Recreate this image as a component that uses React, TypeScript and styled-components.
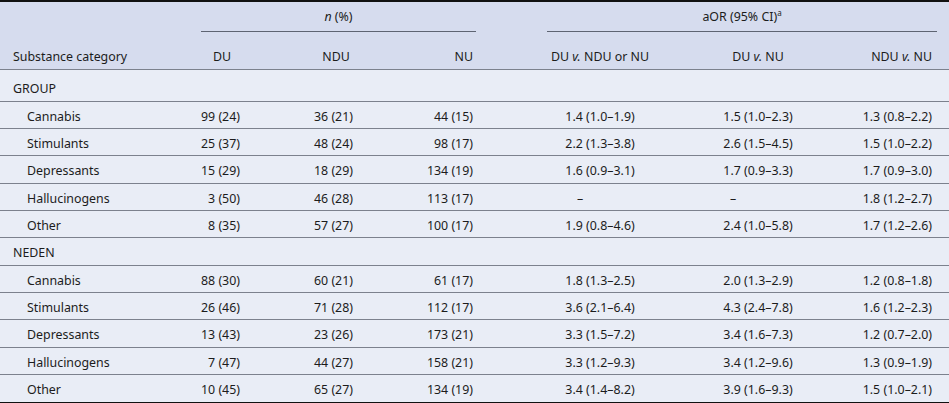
import React from 'react';
import styled, { createGlobalStyle } from 'styled-components';

const GlobalStyle = createGlobalStyle`
  html, body {
    margin: 0;
    padding: 0;
    background: #e9edf6;
  }
  body {
    font-family: "Noto Sans", "DejaVu Sans", sans-serif;
    color: #1c1c1c;
  }
`;

const Table = styled.table`
  width: 949px;
  table-layout: fixed;
  border-collapse: separate;
  border-spacing: 0;
  font-size: 12.4px;
  line-height: 16px;
  background: #e9edf6;
  border-top: 2px solid #111;
  border-bottom: 1px solid #111;
  th, td {
    box-sizing: border-box;
  }
`;

const Head = styled.thead`
  background: #d6dcee;
`;

const HeadCell = styled.th<{ $align?: string; $padLeft?: number; $padRight?: number }>`
  height: 30px;
  padding: 0;
  font-weight: 400;
  text-align: ${p => p.$align || 'center'};
  padding-left: ${p => p.$padLeft || 0}px;
  padding-right: ${p => p.$padRight || 0}px;
  white-space: nowrap;
`;

const ColHeadCell = styled(HeadCell)`
  height: 38px;
  vertical-align: bottom;
  padding-bottom: 5px;
  box-shadow: inset 0 -1px 0 #7c818d;
`;

const GroupLabel = styled.div<{ $left: number; $right: number }>`
  margin: 0 ${p => p.$right}px 0 ${p => p.$left}px;
  border-bottom: 1px solid #5e6472;
  padding: 7px 0 6px;
`;

const Cell = styled.td<{ $height: number; $top: number; $last?: boolean; $align?: string; $padLeft?: number; $padRight?: number }>`
  height: ${p => p.$height}px;
  padding: ${p => p.$top}px ${p => p.$padRight || 0}px 0 ${p => p.$padLeft || 0}px;
  text-align: ${p => p.$align || 'right'};
  white-space: nowrap;
  box-shadow: ${p => (p.$last ? 'none' : 'inset 0 -1px 0 #7c818d')};
`;

const Dash = styled.span<{ $shift: number }>`
  display: inline-block;
  margin-right: ${p => p.$shift}px;
`;

const Sup = styled.sup`
  font-size: 8px;
  vertical-align: 5px;
  line-height: 0;
`;

type Entry = { name: string; du: string; ndu: string; nu: string; a1: string; a2: string; a3: string };

const sections: { title: string; height: number; rows: Entry[] }[] = [
  {
    title: 'GROUP',
    height: 32,
    rows: [
      { name: 'Cannabis', du: '99 (24)', ndu: '36 (21)', nu: '44 (15)', a1: '1.4 (1.0–1.9)', a2: '1.5 (1.0–2.3)', a3: '1.3 (0.8–2.2)' },
      { name: 'Stimulants', du: '25 (37)', ndu: '48 (24)', nu: '98 (17)', a1: '2.2 (1.3–3.8)', a2: '2.6 (1.5–4.5)', a3: '1.5 (1.0–2.2)' },
      { name: 'Depressants', du: '15 (29)', ndu: '18 (29)', nu: '134 (19)', a1: '1.6 (0.9–3.1)', a2: '1.7 (0.9–3.3)', a3: '1.7 (0.9–3.0)' },
      { name: 'Hallucinogens', du: '3 (50)', ndu: '46 (28)', nu: '113 (17)', a1: '–', a2: '–', a3: '1.8 (1.2–2.7)' },
      { name: 'Other', du: '8 (35)', ndu: '57 (27)', nu: '100 (17)', a1: '1.9 (0.8–4.6)', a2: '2.4 (1.0–5.8)', a3: '1.7 (1.2–2.6)' },
    ],
  },
  {
    title: 'NEDEN',
    height: 28,
    rows: [
      { name: 'Cannabis', du: '88 (30)', ndu: '60 (21)', nu: '61 (17)', a1: '1.8 (1.3–2.5)', a2: '2.0 (1.3–2.9)', a3: '1.2 (0.8–1.8)' },
      { name: 'Stimulants', du: '26 (46)', ndu: '71 (28)', nu: '112 (17)', a1: '3.6 (2.1–6.4)', a2: '4.3 (2.4–7.8)', a3: '1.6 (1.2–2.3)' },
      { name: 'Depressants', du: '13 (43)', ndu: '23 (26)', nu: '173 (21)', a1: '3.3 (1.5–7.2)', a2: '3.4 (1.6–7.3)', a3: '1.2 (0.7–2.0)' },
      { name: 'Hallucinogens', du: '7 (47)', ndu: '44 (27)', nu: '158 (21)', a1: '3.3 (1.2–9.3)', a2: '3.4 (1.2–9.6)', a3: '1.3 (0.9–1.9)' },
      { name: 'Other', du: '10 (45)', ndu: '65 (27)', nu: '134 (19)', a1: '3.4 (1.4–8.2)', a2: '3.9 (1.6–9.3)', a3: '1.5 (1.0–2.1)' },
    ],
  },
];

const ROW_H = 27.2;

const orCell = (v: string, shift: number) => (v === '–' ? <Dash $shift={shift}>–</Dash> : v);

export default function App() {
  return (
    <>
      <GlobalStyle />
      <Table>
        <colgroup>
          <col style={{ width: 180 }} />
          <col style={{ width: 60 }} />
          <col style={{ width: 113 }} />
          <col style={{ width: 120 }} />
          <col style={{ width: 224 }} />
          <col style={{ width: 122 }} />
          <col style={{ width: 130 }} />
        </colgroup>
        <Head>
          <tr>
            <HeadCell />
            <HeadCell colSpan={3}>
              <GroupLabel $left={21} $right={-3}>
                <i>n</i> (%)
              </GroupLabel>
            </HeadCell>
            <HeadCell colSpan={3}>
              <GroupLabel $left={74} $right={12}>
                aOR (95% CI)<Sup>a</Sup>
              </GroupLabel>
            </HeadCell>
          </tr>
          <tr>
            <ColHeadCell $align="left" $padLeft={13}>Substance category</ColHeadCell>
            <ColHeadCell $padLeft={24}>DU</ColHeadCell>
            <ColHeadCell $padLeft={79}>NDU</ColHeadCell>
            <ColHeadCell $align="right">NU</ColHeadCell>
            <ColHeadCell $padLeft={30}>
              DU <i>v.</i> NDU or NU
            </ColHeadCell>
            <ColHeadCell>
              DU <i>v.</i> NU
            </ColHeadCell>
            <ColHeadCell $align="right" $padRight={17}>
              NDU <i>v.</i> NU
            </ColHeadCell>
          </tr>
        </Head>
        <tbody>
          {sections.map((s, si) => (
            <React.Fragment key={s.title}>
              <tr>
                <Cell $height={s.height} $top={s.height - 26} $align="left" $padLeft={13} colSpan={7}>
                  {s.title}
                </Cell>
              </tr>
              {s.rows.map((r, ri) => {
                const last = si === sections.length - 1 && ri === s.rows.length - 1;
                const c = { $height: ROW_H, $top: 3, $last: last };
                return (
                  <tr key={s.title + r.name}>
                    <Cell {...c} $align="left" $padLeft={27}>{r.name}</Cell>
                    <Cell {...c}>{r.du}</Cell>
                    <Cell {...c}>{r.ndu}</Cell>
                    <Cell {...c}>{r.nu}</Cell>
                    <Cell {...c} $align="center" $padLeft={30}>{orCell(r.a1, 40)}</Cell>
                    <Cell {...c} $align="center">{orCell(r.a2, 50)}</Cell>
                    <Cell {...c} $padRight={17}>{r.a3}</Cell>
                  </tr>
                );
              })}
            </React.Fragment>
          ))}
        </tbody>
      </Table>
    </>
  );
}
